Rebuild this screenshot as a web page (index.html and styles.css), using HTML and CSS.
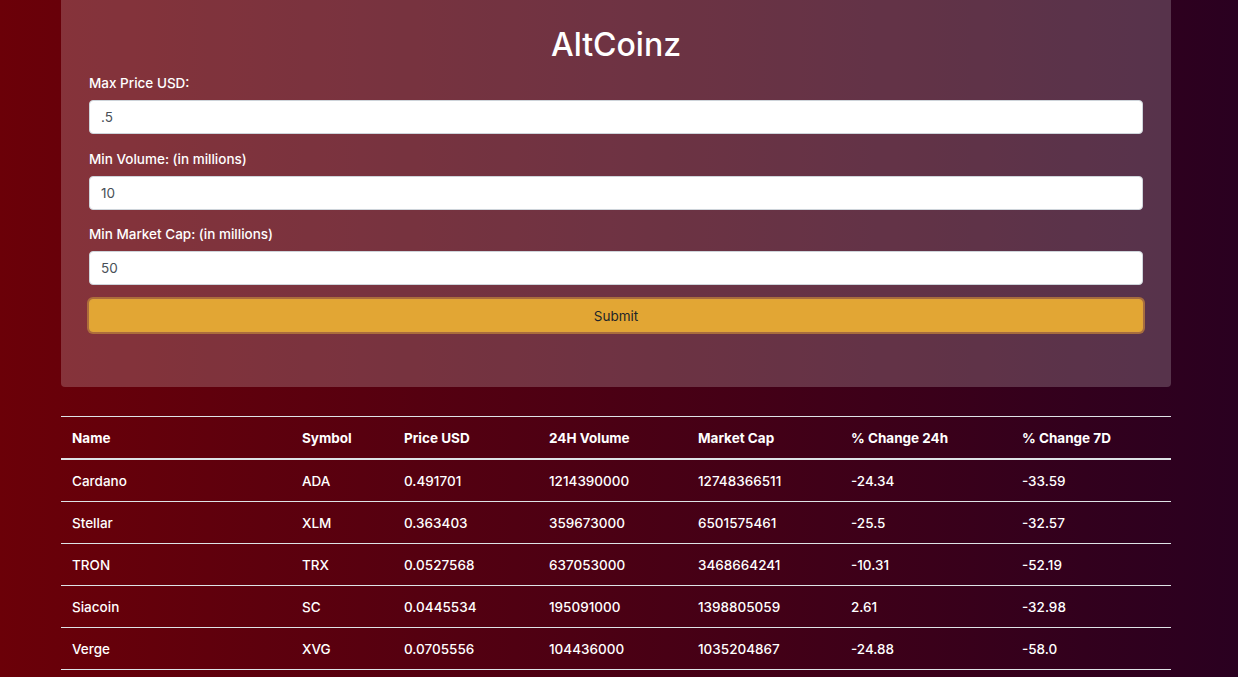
FILE: index.html
```html
<!DOCTYPE html>
<html>
<head>
<meta charset="utf-8">
<title>AltCoinz</title>
<link rel="stylesheet" href="styles.css">
</head>
<body>
<div class="container">
  <div class="jumbotron">
    <h1 class="title">AltCoinz</h1>
    <form class="filter-form">
      <div class="form-group">
        <label class="form-label">Max Price USD:</label>
        <input class="form-input" type="text" value=".5">
      </div>
      <div class="form-group">
        <label class="form-label">Min Volume: (in millions)</label>
        <input class="form-input" type="text" value="10">
      </div>
      <div class="form-group">
        <label class="form-label">Min Market Cap: (in millions)</label>
        <input class="form-input" type="text" value="50">
      </div>
      <button class="submit-btn" type="button">Submit</button>
    </form>
  </div>
  <table class="coin-table">
    <colgroup>
      <col class="c-name"><col class="c-sym"><col class="c-price"><col class="c-vol"><col class="c-cap"><col class="c-24"><col class="c-7d">
    </colgroup>
    <thead>
      <tr><th>Name</th><th>Symbol</th><th>Price USD</th><th>24H Volume</th><th>Market Cap</th><th>% Change 24h</th><th>% Change 7D</th></tr>
    </thead>
    <tbody>
      <tr><td>Cardano</td><td>ADA</td><td>0.491701</td><td>1214390000</td><td>12748366511</td><td>-24.34</td><td>-33.59</td></tr>
      <tr><td>Stellar</td><td>XLM</td><td>0.363403</td><td>359673000</td><td>6501575461</td><td>-25.5</td><td>-32.57</td></tr>
      <tr><td>TRON</td><td>TRX</td><td>0.0527568</td><td>637053000</td><td>3468664241</td><td>-10.31</td><td>-52.19</td></tr>
      <tr><td>Siacoin</td><td>SC</td><td>0.0445534</td><td>195091000</td><td>1398805059</td><td>2.61</td><td>-32.98</td></tr>
      <tr><td>Verge</td><td>XVG</td><td>0.0705556</td><td>104436000</td><td>1035204867</td><td>-24.88</td><td>-58.0</td></tr>
    </tbody>
  </table>
</div>
</body>
</html>
```
FILE: styles.css
```css
html, body {
  margin: 0;
  padding: 0;
}
body {
  width: 1238px;
  height: 677px;
  overflow: hidden;
  background: linear-gradient(to right, #6b0008 0%, #2a0020 100%);
  font-family: Inter, "Noto Sans", sans-serif;
  color: #ffffff;
}
.container {
  width: 1110px;
  margin-left: 61px;
  display: flex;
  flex-direction: column;
}
.jumbotron {
  background: rgba(255, 255, 255, 0.2);
  border-radius: 0 0 4px 4px;
  padding: 25px 28px 54px;
  height: 387px;
  box-sizing: border-box;
}
.title {
  margin: 0 0 8px;
  text-align: center;
  font-family: Inter, "Noto Sans", sans-serif;
  font-weight: 500;
  font-size: 32px;
  line-height: 40px;
  letter-spacing: 0;
}
.filter-form {
  display: flex;
  flex-direction: column;
}
.form-group {
  display: flex;
  flex-direction: column;
  gap: 7px;
  margin-bottom: 15px;
}
.form-group:nth-child(2) {
  margin-bottom: 14px;
}
.form-group:nth-child(3) {
  margin-bottom: 14px;
}
.form-label {
  font-size: 13.5px;
  font-weight: 500;
  line-height: 20px;
}
.form-input {
  height: 34px;
  box-sizing: border-box;
  border: 1px solid #ced4da;
  border-radius: 4px;
  background: #ffffff;
  padding: 0 11px;
  font-family: Inter, "Noto Sans", sans-serif;
  font-size: 13.5px;
  color: #495057;
  outline: none;
}
.submit-btn {
  height: 33px;
  margin: 0;
  border: 1px solid #e0a43a;
  border-radius: 4px;
  background: #e2a634;
  box-shadow: 0 0 0 2px rgba(180, 120, 60, 0.85);
  font-family: Inter, "Noto Sans", sans-serif;
  font-size: 13.5px;
  color: #212529;
  cursor: pointer;
}
.coin-table {
  margin-top: 29px;
  width: 1110px;
  border-collapse: collapse;
  table-layout: fixed;
  font-size: 13.5px;
}
.c-name { width: 230px; }
.c-sym { width: 102px; }
.c-price { width: 145px; }
.c-vol { width: 149px; }
.c-cap { width: 153px; }
.c-24 { width: 171px; }
.c-7d { width: 160px; }
.coin-table th,
.coin-table td {
  text-align: left;
  padding: 0 11px;
  white-space: nowrap;
}
.coin-table th {
  height: 41px;
  font-weight: 700;
  border-top: 1px solid #dee2e6;
  border-bottom: 2px solid #dee2e6;
}
.coin-table td {
  height: 41px;
  font-weight: 500;
  border-bottom: 1px solid #dee2e6;
}
```
